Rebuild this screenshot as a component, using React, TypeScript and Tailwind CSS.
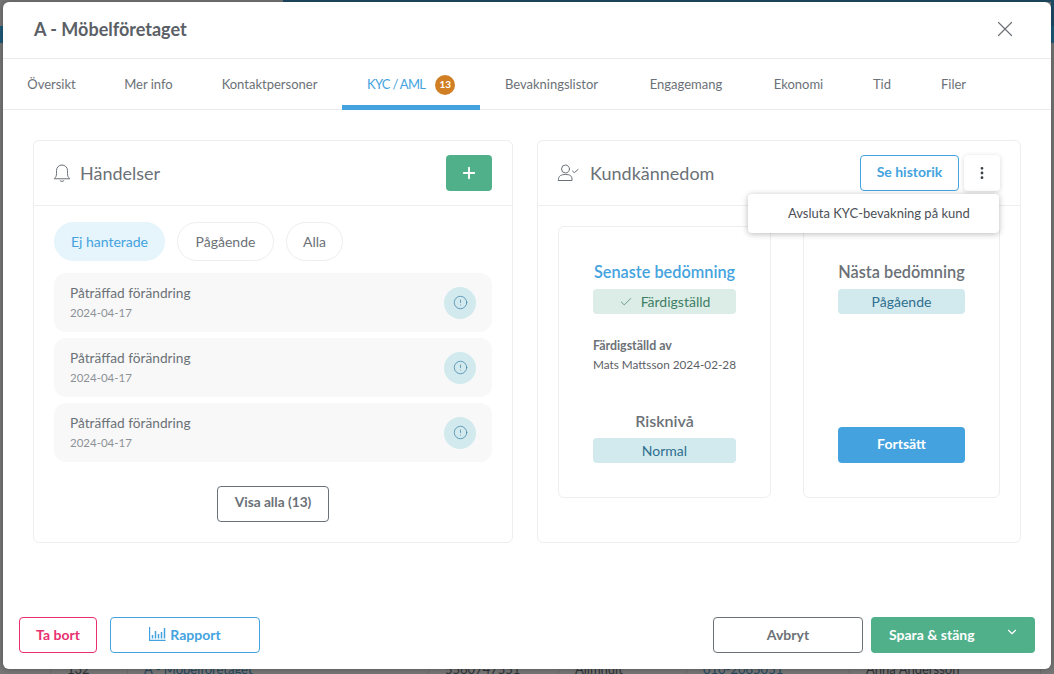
import { Check, ChevronDown, CircleAlert, EllipsisVertical, Plus, X } from "lucide-react";

const tabs = [
  { label: "Översikt", width: "w-[97px]" },
  { label: "Mer info", width: "w-[97px]" },
  { label: "Kontaktpersoner", width: "w-[145px]" },
  { label: "KYC / AML", width: "w-[138px]" },
  { label: "Bevakningslistor", width: "w-[143px]" },
  { label: "Engagemang", width: "w-[126px]" },
  { label: "Ekonomi", width: "w-[99px]" },
  { label: "Tid", width: "w-[68px]" },
  { label: "Filer", width: "w-[75px]" },
];
const rows = ["a", "b", "c"];

function BellIcon() {
  return (
    <svg width="18" height="20" viewBox="0 0 18 20" fill="none" stroke="#6b7177" strokeWidth="1" strokeLinecap="round" strokeLinejoin="round">
      <path d="M1.5 15.5c1.4-1.3 2-2.6 2-5V7.5a5.5 5.5 0 0 1 11 0v3c0 2.4.6 3.700 2 5z" />
      <path d="M7.2 17.8c.9.8 2.7.8 3.6 0" />
    </svg>
  );
}

function UserCheckIcon() {
  return (
    <svg width="22" height="18" viewBox="0 0 22 18" fill="none" stroke="#6b7177" strokeWidth="1" strokeLinecap="round" strokeLinejoin="round">
      <circle cx="8.500" cy="5" r="4" />
      <path d="M1.500 15c0-3 2.500-4.500 7-4.500s6.500 1.500 6.500 4.500v1.500H1.500z" />
      <path d="M15.500 7l1.800 1.700L21 5.500" />
    </svg>
  );
}

function ChartIcon() {
  return (
    <svg width="17" height="14" viewBox="0 0 17 14" fill="none" stroke="#44a3de" strokeWidth="1.200">
      <path d="M.6 0v13.400h16" />
      <path d="M3.500 8v3.500M6.500 4v7.500M9.500 7v4.500M12.500 5v6.500M15.500 1v10.500" strokeWidth="1.500" />
    </svg>
  );
}

function EventRow() {
  return (
    <div className="flex h-[59px] items-center justify-between rounded-xl bg-[#f8f8f8] pr-4 pl-4">
      <div>
        <div className="text-[13.700px] leading-[18px] text-[#6b7177]">Påträffad förändring</div>
        <div className="mt-[3px] text-[11.500px] leading-[16px] text-[#8d9297]">2024-04-17</div>
      </div>
      <div className="flex h-8 w-8 items-center justify-center rounded-full bg-[#d2eaee]">
        <CircleAlert size={15} strokeWidth={1.2} className="text-[#3f83a8]" />
      </div>
    </div>
  );
}

function PageBehind() {
  return (
    <div className="flex h-full flex-col">
      <div className="ml-[283px] h-[2px] bg-[#1e4c66]" />
      <div className="flex h-[24px] justify-end">
        <div className="w-[3px] bg-[#1e4c66]" />
      </div>
      <div className="h-[17px] bg-[#1e5a78]" />
      <div className="mt-auto mb-[-5px] ml-[50px] grid h-[20px] grid-cols-[77px_301px_130px_128px_163px_192px] text-[13px] leading-[20px] text-[#2f3337]">
        <div className="border-l border-[#6c6c6c] px-4">132</div>
        <div className="border-l border-[#6c6c6c] px-4 text-[#23485f]">A - Möbelföretaget</div>
        <div className="border-l border-[#6c6c6c] px-4">5560747551</div>
        <div className="border-l border-[#6c6c6c] px-4">Allmnult</div>
        <div className="border-l border-[#6c6c6c] px-4 text-[#23485f]">010-2065051</div>
        <div className="border-x border-[#6c6c6c] px-4">Anna Andersson</div>
      </div>
    </div>
  );
}

export default function App() {
  return (
    <div className="relative h-[674px] w-[1054px] overflow-hidden bg-[#767676] font-['Lato','Liberation_Sans',sans-serif]">
      <PageBehind />

      <div className="absolute top-[2px] left-[3px] flex h-[667px] w-[1048px] flex-col rounded-md bg-white shadow-[0_0_6px_rgba(0,0,0,0.3)]">
        {/* Header */}
        <div className="flex h-[57px] items-center justify-between border-b border-[#e9ebec] pr-[33px] pb-[2px] pl-[31px]">
          <h1 className="text-[18px] font-bold text-[#5b6066]">A - Möbelföretaget</h1>
          <X size={26} strokeWidth={1.1} className="text-[#6b7177]" />
        </div>

        {/* Tabs */}
        <div className="flex h-[51px] border-b border-[#e9ebec] text-[13px] text-[#6b7177]">
          {tabs.map((tab) =>
            tab.label === "KYC / AML" ? (
              <div key={tab.label} className={`flex h-[51px] items-center gap-[10px] border-b-[5px] border-[#44a3de] pt-[5px] pl-[25px] text-[#44a3de] ${tab.width}`}>
                <span className="tracking-[-0.7px]">{tab.label}</span>
                <span className="flex h-5 w-5 items-center justify-center rounded-full bg-[#d17f25] text-[10px] font-bold text-white">13</span>
              </div>
            ) : (
              <div key={tab.label} className={`flex items-center justify-center pt-[1px] ${tab.width}`}>
                {tab.label}
              </div>
            ),
          )}
        </div>

        {/* Body */}
        <div className="grid grid-cols-[480px_484px] gap-6 pt-[30px] pl-[30px]">
          <section className="h-[403px] rounded-md border border-[#eceeef]">
            <div className="flex h-[65px] items-center justify-between border-b border-[#eceeef] pr-5 pl-[19px]">
              <div className="flex items-center gap-[9px] text-[18px] text-[#6b7177]">
                <BellIcon />
                Händelser
              </div>
              <button className="flex h-9 w-[46px] items-center justify-center rounded bg-[#4fb08a] text-white">
                <Plus size={18} strokeWidth={2.5} />
              </button>
            </div>
            <div className="px-5 pt-4">
              <div className="flex gap-3 text-[14px]">
                <span className="flex h-[39px] w-[111px] items-center justify-center rounded-full bg-[#e6f4fb] text-[#44a3de]">Ej hanterade</span>
                <span className="flex h-[39px] w-[97px] items-center justify-center rounded-full border border-[#eceeef] text-[#6b7177]">Pågående</span>
                <span className="flex h-[39px] w-[57px] items-center justify-center rounded-full border border-[#eceeef] text-[#6b7177]">Alla</span>
              </div>
              <div className="mt-3 flex flex-col gap-[6px]">
                {rows.map((r) => (
                  <EventRow key={r} />
                ))}
              </div>
              <div className="mt-6 flex justify-center">
                <button className="h-9 w-[112px] rounded border border-[#6b7177] pb-[3px] text-[13.700px] font-bold text-[#6b7177]">Visa alla (13)</button>
              </div>
            </div>
          </section>

          <section className="relative h-[403px] rounded-md border border-[#eceeef]">
            <div className="flex h-[65px] items-center justify-between border-b border-[#eceeef] pr-5 pl-[19px]">
              <div className="flex items-center gap-[11px] text-[18px] text-[#6b7177]">
                <UserCheckIcon />
                Kundkännedom
              </div>
              <div className="flex items-center gap-[5px]">
                <button className="h-9 w-[99px] rounded border border-[#44a3de] pb-[3px] text-[14px] font-bold text-[#44a3de]">Se historik</button>
                <button className="flex h-9 w-9 items-center justify-center rounded bg-white text-[#3c4146] shadow-[0_1px_5px_rgba(0,0,0,0.16)]">
                  <EllipsisVertical size={16} strokeWidth={2.2} />
                </button>
              </div>
            </div>

            <div className="grid grid-cols-[213px_197px] gap-8 pt-5 pl-5">
              <div className="flex h-[272px] flex-col rounded-md border border-[#eceeef] px-[34px] pt-[35px]">
                <h3 className="text-center text-[16.300px] leading-5 font-semibold whitespace-nowrap text-[#44a3de]">Senaste bedömning</h3>
                <div className="mt-[7px] flex h-[25px] items-center justify-center gap-2 rounded bg-[#dcece6] text-[14px] text-[#3e7f64]">
                  <Check size={14} strokeWidth={1.25} />
                  Färdigställd
                </div>
                <div className="mt-6 text-[12.400px] leading-4 font-bold whitespace-nowrap text-[#6b7177]">Färdigställd av</div>
                <div className="mt-[3px] text-[11.750px] leading-4 whitespace-nowrap text-[#5b6066]">Mats Mattsson 2024-02-28</div>
                <h3 className="mt-[38px] text-center text-[16px] leading-5 font-semibold text-[#6b7177]">Risknivå</h3>
                <div className="mt-[7px] flex h-[25px] items-center justify-center rounded bg-[#d2eaee] text-[14px] text-[#2f6f8f]">Normal</div>
              </div>
              <div className="flex h-[272px] flex-col rounded-md border border-[#eceeef] px-[34px] pt-[35px]">
                <h3 className="text-center text-[16.300px] leading-5 font-semibold whitespace-nowrap text-[#6b7177]">Nästa bedömning</h3>
                <div className="mt-[7px] flex h-[25px] items-center justify-center rounded bg-[#d2eaee] text-[14px] text-[#2f6f8f]">Pågående</div>
                <button className="mt-[113px] h-9 rounded bg-[#44a3de] pb-1 text-[14px] font-bold text-white">Fortsätt</button>
              </div>
            </div>

            <div className="absolute top-[53px] right-[21px] flex h-[39px] w-[251px] items-center rounded bg-white pl-10 text-[13px] text-[#4b5056] shadow-[0_1px_6px_rgba(0,0,0,0.28)]">
              Avsluta KYC-bevakning på kund
            </div>
          </section>
        </div>

        {/* Footer */}
        <div className="mt-auto flex items-center justify-between pr-4 pb-4 pl-4 text-[14px] font-bold">
          <div className="flex gap-[13px]">
            <button className="h-9 w-[78px] rounded border border-[#e8306f] pb-[2px] text-[#e8306f]">Ta bort</button>
            <button className="flex h-9 w-[150px] items-center justify-center gap-1 rounded border border-[#44a3de] pb-[2px] text-[#44a3de]">
              <ChartIcon />
              Rapport
            </button>
          </div>
          <div className="flex gap-2">
            <button className="h-9 w-[150px] rounded border border-[#6b7177] pb-[2px] text-[#6b7177]">Avbryt</button>
            <button className="flex h-9 w-[164px] items-center justify-between rounded bg-[#4fb08a] pr-4 pb-[2px] pl-[18px] text-white">
              Spara &amp; stäng
              <ChevronDown size={14} strokeWidth={2} className="mb-1" />
            </button>
          </div>
        </div>
      </div>
    </div>
  );
}
